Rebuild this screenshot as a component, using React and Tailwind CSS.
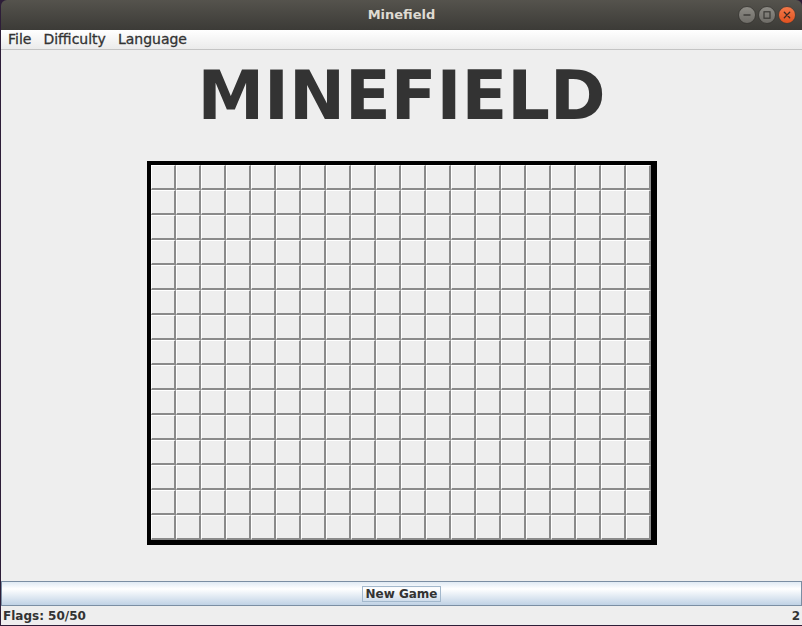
import React from 'react';

const COLS = 20;
const ROWS = 15;

const WinButton = ({ kind }) => {
  if (kind === 'close') {
    return (
      <svg width="18" height="18" viewBox="0 0 18 18">
        <defs>
          <linearGradient id="cl" x1="0" y1="0" x2="0" y2="1">
            <stop offset="0" stopColor="#f47a4b" />
            <stop offset="1" stopColor="#e0501e" />
          </linearGradient>
        </defs>
        <circle cx="9" cy="9" r="8.5" fill="url(#cl)" stroke="#3a3935" strokeWidth="0.8" />
        <path d="M6.3 6.3 L11.7 11.7 M11.7 6.3 L6.3 11.7" stroke="#3b2a22" strokeWidth="1.3" strokeLinecap="round" />
      </svg>
    );
  }
  return (
    <svg width="18" height="18" viewBox="0 0 18 18">
      <defs>
        <linearGradient id={'g' + kind} x1="0" y1="0" x2="0" y2="1">
          <stop offset="0" stopColor="#8e8c86" />
          <stop offset="1" stopColor="#6d6b66" />
        </linearGradient>
      </defs>
      <circle cx="9" cy="9" r="8.5" fill={`url(#g${kind})`} stroke="#33322e" strokeWidth="0.8" />
      {kind === 'min' ? (
        <path d="M5.5 9 H12.5" stroke="#3a3935" strokeWidth="1.4" />
      ) : (
        <rect x="6" y="5.8" width="6" height="6.4" fill="none" stroke="#3a3935" strokeWidth="1.2" />
      )}
    </svg>
  );
};

export default function App() {
  const cells = Array.from({ length: COLS * ROWS });
  return (
    <div className="w-[802px] h-[626px] bg-[#2d1d38] pl-[1px] pb-[1px] flex flex-col overflow-hidden" style={{ fontFamily: '"DejaVu Sans", sans-serif' }}>
      <div className="h-[30px] rounded-t-[6px] bg-gradient-to-b from-[#55534d] to-[#3c3b37] flex items-center justify-center relative">
        <span className="text-[13px] font-bold text-[#dfdbd2]">Minefield</span>
        <div className="absolute right-[6px] top-[6px] flex gap-[2px]">
          <WinButton kind="min" />
          <WinButton kind="max" />
          <WinButton kind="close" />
        </div>
      </div>
      <div className="flex-1 bg-[#eeeeee] flex flex-col">
        <div className="h-[20px] bg-gradient-to-b from-white to-[#ebebeb] border-b border-[#c4c4c4] flex items-center pl-[1px] text-[14px] text-[#333333] [-webkit-text-stroke:0.3px_#333333]">
          <span className="px-[6px]">File</span>
          <span className="px-[6px]">Difficulty</span>
          <span className="px-[6px]">Language</span>
        </div>
        <div className="flex-1 flex flex-col items-center">
          <div className="mt-[12px] text-[67px] leading-[68px] font-bold text-[#333333]">MINEFIELD</div>
          <div className="mt-[31px] bg-black pl-[4px] pt-[4px] pr-[6px] pb-[5px]">
            <div className="grid grid-cols-[repeat(20,25px)] grid-rows-[repeat(15,25px)]">
              {cells.map((_, i) => (
                <div key={i} className="bg-[#eeeeee] border-l border-t border-white border-r-2 border-b-2 border-r-[#8a8a8a] border-b-[#8a8a8a]" />
              ))}
            </div>
          </div>
        </div>
        <div className="h-[25px] border border-[#7b8ea3] bg-gradient-to-b from-[#e0eaf4] via-white via-30% to-[#c0d2e5] flex items-center justify-center">
          <span className="border border-[#a3b8cc] px-[2px] leading-[14px] text-[12px] font-bold text-[#333333]">New Game</span>
        </div>
        <div className="h-[19px] flex items-center justify-between px-[2px] pt-[1px] text-[12px] font-bold text-[#333333]">
          <span>Flags: 50/50</span>
          <span>2</span>
        </div>
      </div>
    </div>
  );
}
